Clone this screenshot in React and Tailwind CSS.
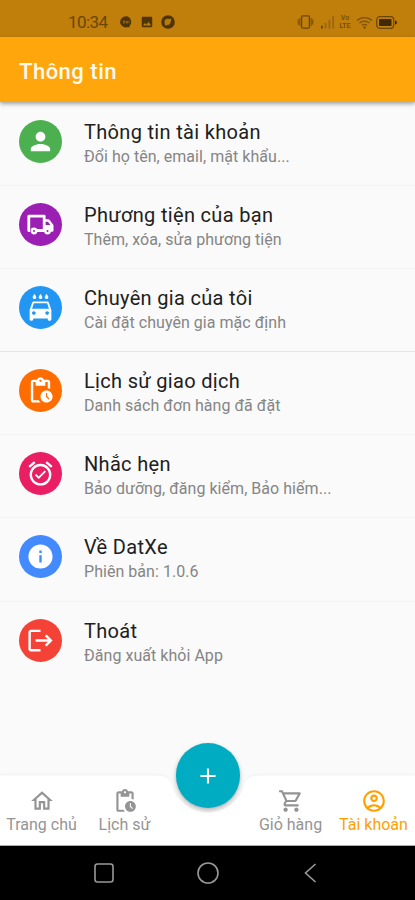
import {
  MdPerson,
  MdLocalCarWash,
  MdPendingActions,
  MdAlarmOn,
  MdInfo,
  MdLogout,
  MdOutlineHome,
  MdOutlineShoppingCart,
  MdOutlineAccountCircle,
  MdAdd,
  MdImage,
} from 'react-icons/md';

function TruckIcon({ className }) {
  return (
    <svg className={className} viewBox="0 0 29 29" fill="none" stroke="currentColor">
      <path d="M4 20.500H2.800V6.200H18.200V20.500H10" strokeWidth="2.800" strokeLinejoin="round" />
      <path d="M18.700 10.500H22.500L26.300 15.500V20.500H19" strokeWidth="2.400" strokeLinejoin="round" />
      <path d="M19 15.500h7.500v5H19z" fill="currentColor" strokeWidth="1" />
      <circle cx="8" cy="21" r="2.200" className="fill-[#9c1fb3]" strokeWidth="2.400" />
      <circle cx="21.500" cy="21" r="2.200" className="fill-[#9c1fb3]" strokeWidth="2.400" />
    </svg>
  );
}

const menuItems = [
  { icon: MdPerson, color: 'bg-[#4caf50]', title: 'Thông tin tài khoản', text: 'Đổi họ tên, email, mật khẩu...' },
  { icon: TruckIcon, color: 'bg-[#9c1fb3]', title: 'Phương tiện của bạn', text: 'Thêm, xóa, sửa phương tiện' },
  { icon: MdLocalCarWash, color: 'bg-[#2196f3]', title: 'Chuyên gia của tôi', text: 'Cài đặt chuyên gia mặc định', strong: true },
  { icon: MdPendingActions, color: 'bg-[#ff6d00]', title: 'Lịch sử giao dịch', text: 'Danh sách đơn hàng đã đặt' },
  { icon: MdAlarmOn, color: 'bg-[#e91e63]', title: 'Nhắc hẹn', text: 'Bảo dưỡng, đăng kiểm, Bảo hiểm...' },
  { icon: MdInfo, color: 'bg-[#448aff]', title: 'Về DatXe', text: 'Phiên bản: 1.0.6' },
  { icon: MdLogout, color: 'bg-[#f44336]', title: 'Thoát', text: 'Đăng xuất khỏi App', last: true },
];

function StatusBar() {
  return (
    <div className="h-[37px] shrink-0 bg-[#c07e0a] flex items-center justify-between pl-[68px] pr-[18px] pt-[7px] text-[#4f3406]">
      <div className="flex items-center">
        <span className="text-[17px] leading-none w-[39px] whitespace-nowrap tracking-[-0.6px] text-[#69470c]">10:34</span>
        <svg className="w-[12px] h-[12px] ml-[13px]" viewBox="0 0 12 12">
          <path d="M6 .3a5.8 5.5 0 1 0 0 11.2L8 11l1.500.6V10A5.700 5.700 0 0 0 6 .3z" fill="currentColor" />
          <path d="M2.800 5h2L3 7h2M6 5.300h1.500V7H6zM9 4.500V7" stroke="#a66e0d" strokeWidth=".8" fill="none" />
        </svg>
        <MdImage className="w-[14px] h-[14px] ml-[8px]" />
        <svg className="w-[14px] h-[14px] ml-[7px]" viewBox="0 0 14 14">
          <circle cx="7" cy="7" r="6.800" fill="currentColor" />
          <path d="M3.500 7c0-2 1.500-3.200 3-3.200l2 .2 2-.6-.6 2C9.900 8 8.500 10 6.500 10L4 10.500z" fill="#b87a0b" />
        </svg>
      </div>
      <div className="flex items-center">
        <svg className="w-[17px] h-[14px]" viewBox="0 0 18 16" fill="none" stroke="#69470c">
          <rect x="4.500" y="1" width="9" height="14" rx="1.500" strokeWidth="1.500" />
          <path d="M2.500 3.500v9M.7 5v6M15.500 3.500v9M17.300 5v6" strokeWidth="1" />
        </svg>
        <svg className="w-[15px] h-[14px] ml-[6px]" viewBox="0 0 16 14">
          <path d="M1 11h2v3H1z" fill="#69470c" />
          <path d="M5 8h2v6H5zM9 4.500h2V14H9zM13 .5h2V14h-2z" fill="#9a6710" />
        </svg>
        <span className="w-[14px] ml-[3px] flex flex-col items-center text-[7px] leading-[8px] font-medium text-[#724c0b]">
          <span>Vo</span>
          <span>LTE</span>
        </span>
        <svg className="w-[17px] h-[13px] ml-[4px]" viewBox="0 0 17 13" fill="none" stroke="#7d530c" strokeWidth="1.300">
          <path d="M1 4.500a11 11 0 0 1 15 0M3.500 7a7.500 7.500 0 0 1 10 0M6 9.400a4 4 0 0 1 5 0" />
          <circle cx="8.500" cy="11.500" r=".7" />
        </svg>
        <svg className="w-[21px] h-[13px] ml-[3px]" viewBox="0 0 21 13">
          <rect x=".7" y=".7" width="17" height="11.600" rx="3" fill="none" stroke="#69470c" strokeWidth="1.200" />
          <rect x="3" y="3" width="12.500" height="7" rx=".7" fill="#3f2a05" />
          <path d="M19 4.500q2 0 2 2t-2 2z" fill="#3f2a05" />
        </svg>
      </div>
    </div>
  );
}

function MenuRow({ item }) {
  const Icon = item.icon;
  const border = item.last ? 'border-transparent' : item.strong ? 'border-[#e4e4e4]' : 'border-[#f3f3f3]';
  return (
    <div className={`h-[83.1px] flex gap-[22px] pl-[19px] pt-[17px] border-b ${border}`}>
      <div className={`w-[43px] h-[43px] rounded-full flex items-center justify-center shrink-0 ${item.color}`}>
        <Icon className="w-[29px] h-[29px] text-white" />
      </div>
      <div className="whitespace-nowrap">
        <p className="text-[20px] leading-[24px] tracking-[0.32px] text-[#202020]">{item.title}</p>
        <p className="text-[16px] leading-[20px] tracking-[0.04px] mt-[3px] text-[#858585]">{item.text}</p>
      </div>
    </div>
  );
}

function Tab({ icon: Icon, label, className }) {
  return (
    <div className={`flex flex-col items-center whitespace-nowrap ${className}`}>
      <Icon className="w-[26px] h-[26px]" />
      <span className="text-[16px] leading-[20px] mt-px">{label}</span>
    </div>
  );
}

export default function App() {
  return (
    <div className="w-full h-[900px] flex flex-col overflow-hidden bg-[#fafafa] font-['Roboto','Noto_Sans',sans-serif]">
      <StatusBar />
      <header className="h-[65px] shrink-0 bg-[#ffa60d] flex items-center pl-[19px] pt-[3px] shadow-[0_2px_4px_rgba(0,0,0,0.35)] relative">
        <h1 className="text-[22px] tracking-[0.5px] font-medium text-[#fffaf0]">Thông tin</h1>
      </header>

      <main className="flex-1 pt-px">
        {menuItems.map((item) => (
          <MenuRow key={item.title} item={item} />
        ))}
      </main>

      {/* Bottom tabs with a notch for the add button */}
      <nav className="relative h-[71px] shrink-0">
        <svg className="absolute inset-0 w-full h-[71px] overflow-visible drop-shadow-[0_-1px_1px_rgba(0,0,0,0.04)]" viewBox="0 0 415 71">
          <path d="M0 .5H157Q168 .5 171 8A38 38 0 0 0 245 8Q248 .5 259 .5H415V71H0z" fill="#fff" />
        </svg>
        <button className="absolute left-[176px] -top-[32px] w-[64px] h-[65px] rounded-full bg-[#00acc1] flex items-center justify-center shadow-[0_2px_4px_rgba(0,0,0,0.3)]">
          <MdAdd className="w-[26px] h-[26px] text-white" />
        </button>
        <div className="relative pointer-events-none h-full flex justify-between pt-[13px] border-b border-[#aaa] text-[#949494]">
          <div className="flex">
            <Tab icon={MdOutlineHome} label="Trang chủ" className="w-[83px]" />
            <Tab icon={MdPendingActions} label="Lịch sử" className="w-[83px]" />
          </div>
          <div className="flex">
            <Tab icon={MdOutlineShoppingCart} label="Giỏ hàng" className="w-[83px]" />
            <Tab icon={MdOutlineAccountCircle} label="Tài khoản" className="w-[83px] text-[#ffa000]" />
          </div>
        </div>
      </nav>

      {/* System navigation */}
      <div className="h-[54px] shrink-0 bg-black flex items-center justify-center gap-[82px] text-[#999]">
        <svg className="w-[22px] h-[22px]" viewBox="0 0 22 22" fill="none" stroke="currentColor" strokeWidth="1.600">
          <rect x="2" y="2" width="18" height="18" rx="2.500" />
        </svg>
        <svg className="w-[22px] h-[22px]" viewBox="0 0 22 22" fill="none" stroke="currentColor" strokeWidth="1.600">
          <circle cx="11" cy="11" r="10" />
        </svg>
        <svg className="w-[22px] h-[22px]" viewBox="0 0 22 22" fill="none" stroke="currentColor" strokeWidth="1.600">
          <path d="M14.500 2L4.500 11l10 9" />
        </svg>
      </div>
    </div>
  );
}
